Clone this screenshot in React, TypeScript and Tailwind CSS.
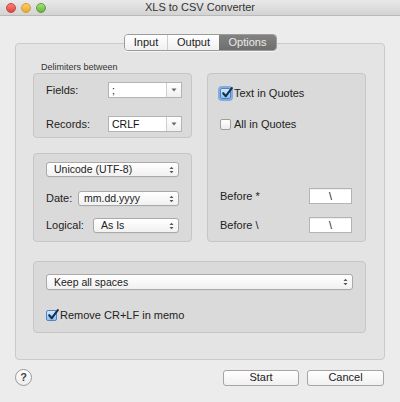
import React from "react";

function Checkbox({ checked, focus }: { checked?: boolean; focus?: boolean }) {
  return (
    <span
      className={
        checked
          ? focus
            ? "relative flex h-[11px] w-[11px] shrink-0 items-center justify-center rounded-[2px] border border-[#4f84c4] bg-gradient-to-b from-[#d4e8fb] to-[#8ec0f0] shadow-[0_0_0_2px_rgba(95,150,225,0.7)]"
            : "relative flex h-[11px] w-[11px] shrink-0 items-center justify-center rounded-[2px] border border-[#4f84c4] bg-gradient-to-b from-[#d4e8fb] to-[#8ec0f0]"
          : "relative flex h-[11px] w-[11px] shrink-0 items-center justify-center rounded-[2px] border border-[#9d9d9d] bg-gradient-to-b from-[#ffffff] to-[#ececec]"
      }
    >
      {checked && (
        <svg width="12" height="12" viewBox="0 0 12 12" className="absolute left-[0px] top-[-2px]">
          <path d="M2.2 6.2 L4.8 9.2 L10.8 1.2" fill="none" stroke="#16304f" strokeWidth="2.1" strokeLinecap="round" strokeLinejoin="round" />
        </svg>
      )}
    </span>
  );
}

function UpDown() {
  return (
    <svg width="5" height="8" viewBox="0 0 5 8" className="shrink-0">
      <path d="M0.5 3 L2.5 0.8 L4.5 3 Z" fill="#555" />
      <path d="M0.5 5 L2.5 7.2 L4.5 5 Z" fill="#555" />
    </svg>
  );
}

function Popup({ text, cls }: { text: string; cls: string }) {
  return (
    <div
      className={
        "flex items-center justify-between rounded-[3px] border border-[#a9a9a9] bg-gradient-to-b from-[#ffffff] to-[#f1f1f1] pr-[4px] shadow-[0_0.5px_0_rgba(0,0,0,0.05)] " +
        cls
      }
    >
      <span className="text-[10.5px] leading-none text-[#222]">{text}</span>
      <UpDown />
    </div>
  );
}

function Combo({ text }: { text: string }) {
  return (
    <div className="flex h-[16px] w-[74px] border border-[#b4b4b4] bg-white">
      <div className="flex flex-1 items-center pl-[3px] text-[10.5px] leading-none text-[#111]">{text}</div>
      <div className="flex w-[15px] items-center justify-center border-l border-[#cfcfcf] bg-gradient-to-b from-[#ffffff] to-[#f0f0f0]">
        <svg width="6" height="4" viewBox="0 0 6 4">
          <path d="M0.5 0.5 L5.5 0.5 L3 3.5 Z" fill="#666" />
        </svg>
      </div>
    </div>
  );
}

function Field({ text }: { text: string }) {
  return (
    <div className="flex h-[16px] w-[43px] items-center justify-center border border-[#b4b4b4] bg-white text-[10.5px] leading-none text-[#111] shadow-[inset_0_1px_0_rgba(0,0,0,0.06)]">
      {text}
    </div>
  );
}

function Button({ text, w }: { text: string; w: string }) {
  return (
    <div
      className={
        "flex h-[16px] items-center justify-center rounded-[3px] border border-[#a5a5a5] bg-gradient-to-b from-[#ffffff] to-[#f0f0f0] text-[11px] leading-none text-[#222] " +
        w
      }
    >
      {text}
    </div>
  );
}

export default function App() {
  return (
    <div className="h-[402px] w-[400px] overflow-hidden bg-[#ececec] font-['Liberation_Sans',Arial,sans-serif]">
      {/* title bar */}
      <div className="relative flex h-[16px] items-center border-b border-[#b9b9b9] bg-gradient-to-b from-[#e9e9e9] to-[#d3d3d3]">
        <div className="flex gap-[5px] pl-[6px]">
          <span className="h-[10px] w-[10px] rounded-full border border-[#c8423b] bg-gradient-to-b from-[#f5837a] to-[#e0443c]" />
          <span className="h-[10px] w-[10px] rounded-full border border-[#d39b2d] bg-gradient-to-b from-[#f8cf6b] to-[#eaa724]" />
          <span className="h-[10px] w-[10px] rounded-full border border-[#5e9a37] bg-gradient-to-b from-[#a9dd7a] to-[#62b73b]" />
        </div>
        <div className="absolute inset-0 flex items-center justify-center text-[11px] leading-none text-[#333]">
          XLS to CSV Converter
        </div>
      </div>

      {/* tabs */}
      <div className="relative z-10 mt-[18px] flex justify-center pl-[1px]">
        <div className="flex h-[17px] overflow-hidden rounded-[4px] border border-[#9c9c9c] text-[11px] leading-none shadow-[0_1px_0_rgba(255,255,255,0.6)]">
          <div className="flex w-[43px] items-center justify-center border-r border-[#cfcfcf] bg-gradient-to-b from-[#ffffff] to-[#f0f0f0] text-[#222]">
            Input
          </div>
          <div className="flex w-[51px] items-center justify-center bg-gradient-to-b from-[#ffffff] to-[#f0f0f0] text-[#222]">
            Output
          </div>
          <div className="flex w-[57px] items-center justify-center bg-gradient-to-b from-[#828282] to-[#6e6e6e] text-[#e9e9e9]">
            Options
          </div>
        </div>
      </div>

      {/* tab box */}
      <div className="mx-[15px] -mt-[8px] h-[317px] rounded-[4px] border border-[#cacaca] bg-[#e4e4e4] pl-[17px] pr-[18px] pt-[18px]">
        <div className="flex gap-[15px]">
          {/* left column */}
          <div className="flex w-[159px] flex-col">
            <div className="h-[11px] pl-[8px] text-[9px] leading-[11px] text-[#333]">Delimiters between</div>
            <div className="flex h-[65px] flex-col gap-[19px] rounded-[4px] border border-[#c6c6c6] bg-[#dadada] pl-[12px] pr-[9px] pt-[8px]">
              <div className="flex items-center justify-between">
                <span className="text-[11px] leading-none text-[#222]">Fields:</span>
                <Combo text=";" />
              </div>
              <div className="-mt-[1px] flex items-center justify-between">
                <span className="text-[11px] leading-none text-[#222]">Records:</span>
                <Combo text="CRLF" />
              </div>
            </div>
            <div className="mt-[15px] flex h-[89px] flex-col rounded-[4px] border border-[#c6c6c6] bg-[#dadada] pl-[12px] pr-[12px] pt-[8px]">
              <Popup text="Unicode (UTF-8)" cls="h-[15px] w-full pl-[7px]" />
              <div className="mt-[14px] flex items-center justify-between">
                <span className="text-[11px] leading-none text-[#222]">Date:</span>
                <Popup text="mm.dd.yyyy" cls="h-[15px] w-[101px] pl-[5px]" />
              </div>
              <div className="mt-[12px] flex items-center justify-between">
                <span className="text-[11px] leading-none text-[#222]">Logical:</span>
                <Popup text="As Is" cls="h-[15px] w-[86px] pl-[7px]" />
              </div>
            </div>
          </div>

          {/* right column */}
          <div className="mt-[11px] flex h-[169px] w-[159px] flex-col rounded-[4px] border border-[#c6c6c6] bg-[#dadada] pl-[12px] pr-[13px] pt-[14px]">
            <div className="flex items-center gap-[3px]">
              <Checkbox checked focus />
              <span className="text-[11px] leading-none text-[#222]">Text in Quotes</span>
            </div>
            <div className="mt-[20px] flex items-center gap-[3px]">
              <Checkbox />
              <span className="text-[11px] leading-none text-[#222]">All in Quotes</span>
            </div>
            <div className="mt-[58px] flex items-center justify-between">
              <span className="text-[11px] leading-none text-[#222]">Before *</span>
              <Field text="\" />
            </div>
            <div className="mt-[13px] flex items-center justify-between">
              <span className="text-[11px] leading-none text-[#222]">Before \</span>
              <Field text="\" />
            </div>
          </div>
        </div>

        {/* bottom group */}
        <div className="mt-[19px] flex h-[72px] flex-col rounded-[4px] border border-[#c6c6c6] bg-[#dadada] pl-[12px] pr-[12px] pt-[12px]">
          <Popup text="Keep all spaces" cls="h-[16px] w-full pl-[7px]" />
          <div className="mt-[20px] flex items-center gap-[3px]">
            <Checkbox checked />
            <span className="text-[11px] leading-none text-[#222]">Remove CR+LF in memo</span>
          </div>
        </div>
      </div>

      {/* bottom bar */}
      <div className="mt-[9px] flex items-center pl-[15px] pr-[16px]">
        <div className="flex h-[17px] w-[17px] items-center justify-center rounded-full border border-[#9a9a9a] bg-gradient-to-b from-[#ffffff] to-[#ececec] text-[11px] font-bold leading-none text-[#444]">
          ?
        </div>
        <div className="ml-auto flex gap-[8px]">
          <Button text="Start" w="w-[76px]" />
          <Button text="Cancel" w="w-[77px]" />
        </div>
      </div>
    </div>
  );
}
